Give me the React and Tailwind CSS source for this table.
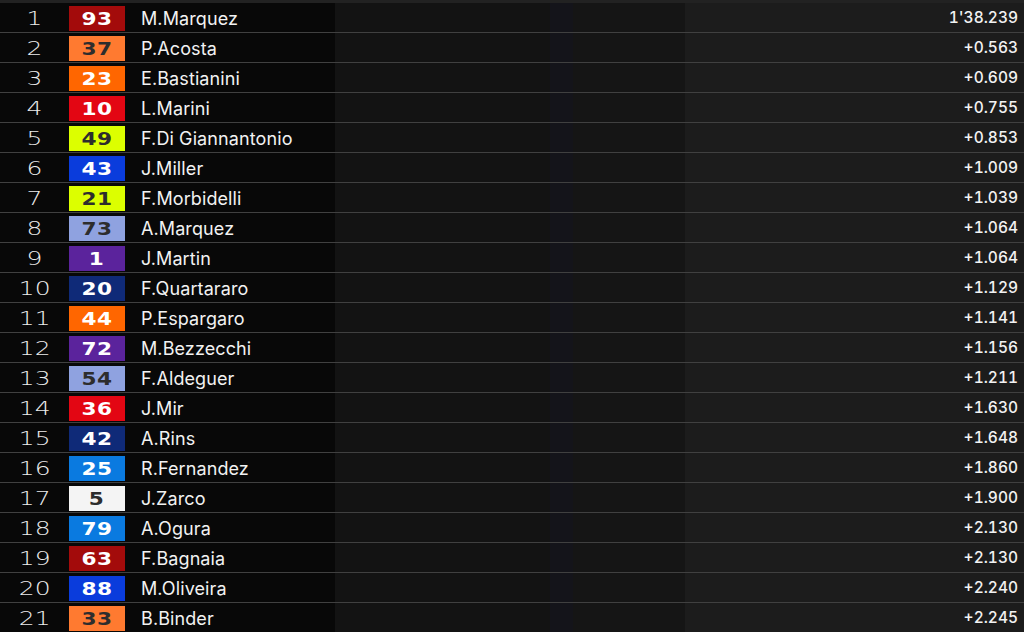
const rows = [
  [1, "93", "M.Marquez", "1'38.239", "bg-[#a30b0b]", "text-white"],
  [2, "37", "P.Acosta", "+0.563", "bg-[#ff7a30]", "text-[#2d2d2d]"],
  [3, "23", "E.Bastianini", "+0.609", "bg-[#ff6600]", "text-white"],
  [4, "10", "L.Marini", "+0.755", "bg-[#e30613]", "text-white"],
  [5, "49", "F.Di Giannantonio", "+0.853", "bg-[#dcff00]", "text-[#2d2d2d]"],
  [6, "43", "J.Miller", "+1.009", "bg-[#0a3cdc]", "text-white"],
  [7, "21", "F.Morbidelli", "+1.039", "bg-[#dcff00]", "text-[#2d2d2d]"],
  [8, "73", "A.Marquez", "+1.064", "bg-[#8fa2e0]", "text-[#2d2d2d]"],
  [9, "1", "J.Martin", "+1.064", "bg-[#5b239c]", "text-white"],
  [10, "20", "F.Quartararo", "+1.129", "bg-[#0f2a78]", "text-white"],
  [11, "44", "P.Espargaro", "+1.141", "bg-[#ff6600]", "text-white"],
  [12, "72", "M.Bezzecchi", "+1.156", "bg-[#5b239c]", "text-white"],
  [13, "54", "F.Aldeguer", "+1.211", "bg-[#8fa2e0]", "text-[#2d2d2d]"],
  [14, "36", "J.Mir", "+1.630", "bg-[#e30613]", "text-white"],
  [15, "42", "A.Rins", "+1.648", "bg-[#0f2a78]", "text-white"],
  [16, "25", "R.Fernandez", "+1.860", "bg-[#0a7ae0]", "text-white"],
  [17, "5", "J.Zarco", "+1.900", "bg-[#f4f4f4]", "text-[#2d2d2d]"],
  [18, "79", "A.Ogura", "+2.130", "bg-[#0a7ae0]", "text-white"],
  [19, "63", "F.Bagnaia", "+2.130", "bg-[#a30b0b]", "text-white"],
  [20, "88", "M.Oliveira", "+2.240", "bg-[#0a3cdc]", "text-white"],
  [21, "33", "B.Binder", "+2.245", "bg-[#ff7a30]", "text-[#2d2d2d]"],
];

function Row({ r }) {
  const [pos, num, name, time, bg, fg] = r;
  return (
    <div className="h-[30px] flex items-stretch border-b border-[#404040]">
      <div className="w-[335px] bg-[#080808] flex items-center pt-[1px]">
        <div className="w-[69px] flex items-center justify-center text-[20px] text-[#ececec] font-['DejaVu_Sans',sans-serif] font-extralight">
          <span className="inline-block scale-x-[1.25]" style={{ fontWeight: 200 }}>{pos}</span>
        </div>
        <div className={`w-[56px] h-[25px] flex items-center justify-center ${bg} ${fg} text-[18px] font-black font-['DejaVu_Sans',sans-serif] tracking-[0.5px]`}>
          <span className="scale-x-[1.2] inline-block">{num}</span>
        </div>
        <div className="ml-[16px] text-[18px] text-[#f2f2f2] font-['Inter',sans-serif] font-normal tracking-[0.1px] whitespace-nowrap">{name}</div>
      </div>
      <div className="w-[215px] bg-[#131313]" />
      <div className="w-[23px] bg-[#14141a]" />
      <div className="w-[112px] bg-[#151515]" />
      <div className="flex-1 bg-[#1c1c1c] flex items-center justify-end pr-[6px] pt-[1px] text-[15.5px] text-[#f2f2f2] font-['Inter',sans-serif] font-medium tabular-nums">
        {time}
      </div>
    </div>
  );
}

export default function App() {
  return (
    <div className="w-[1024px] h-[632px] overflow-hidden bg-[#080808]">
      <div className="h-[3px] bg-[#222222]" />
      {rows.map((r) => (
        <Row key={r[0]} r={r} />
      ))}
    </div>
  );
}
